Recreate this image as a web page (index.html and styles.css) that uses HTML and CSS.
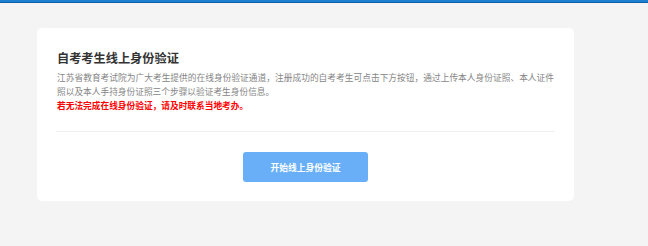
FILE: index.html
```html
<!DOCTYPE html>
<html lang="zh-CN">
<head>
  <meta charset="UTF-8">
  <meta name="viewport" content="width=device-width, initial-scale=1.0">
  <title>自考考生线上身份验证</title>
  <link rel="stylesheet" href="styles.css">
</head>
<body>
  <div class="top-bar"></div>
  <div class="page">
    <div class="card">
      <h1>自考考生线上身份验证</h1>
      <p class="desc">江苏省教育考试院为广大考生提供的在线身份验证通道，注册成功的自考考生可点击下方按钮，通过上传本人身份证照、本人证件照以及本人手持身份证照三个步骤以验证考生身份信息。</p>
      <p class="warn">若无法完成在线身份验证，请及时联系当地考办。</p>
      <div class="divider"></div>
      <div class="actions">
        <button class="btn start-btn">开始线上身份验证</button>
      </div>
    </div>
  </div>
</body>
</html>
```

FILE: styles.css
```css
body {
  font-family: "Liberation Sans", "Noto Sans CJK SC", sans-serif;
  background-color: #f4f4f4;
  margin: 0;
  padding: 0;
  color: #333;
}

.top-bar {
  height: 2px;
  background: #1f80d2;
  border-bottom: 1px solid #0d5fa6;
}

.page {
  padding: 25px 0 0 37px;
}

.card {
  width: 497px;
  padding: 22px 20px 19px;
  background: #fff;
  border-radius: 5px;
}

h1 {
  font-size: 12.2px;
  line-height: 18px;
  font-weight: bold;
  margin: 0 0 4px;
  color: #333;
}

.desc {
  font-size: 8.7px;
  line-height: 13.5px;
  color: #858585;
  margin: 0;
  text-align: justify;
}

.warn {
  font-size: 8.7px;
  line-height: 14px;
  color: #f00;
  font-weight: bold;
  margin: 0;
}

.divider {
  height: 1px;
  background: #f0f0f0;
  margin: 18px -1px 0;
}

.actions {
  display: flex;
  justify-content: center;
  padding-top: 20px;
}

.btn {
  width: 125px;
  height: 30px;
  border: none;
  border-radius: 3px;
  cursor: pointer;
  font-family: inherit;
  font-size: 8.75px;
  font-weight: bold;
}

.start-btn {
  background: #69aff7;
  color: #fff;
}
```
